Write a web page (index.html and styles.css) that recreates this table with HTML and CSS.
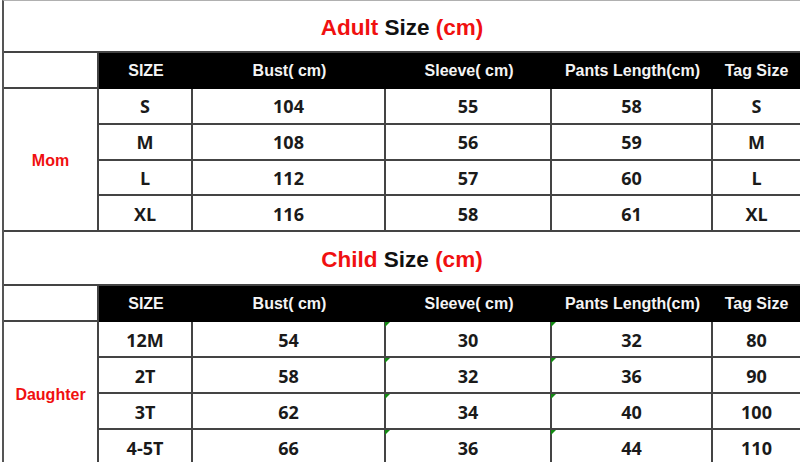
FILE: index.html
```html
<!DOCTYPE html>
<html>
<head>
<meta charset="utf-8">
<link rel="stylesheet" href="styles.css">
</head>
<body>
<div class="sheet">
  <section class="sec sec-adult">
    <div class="title"><p class="title-text"><span class="red">Adult</span> Size <span class="red">(cm)</span></p></div>
    <div class="cell blank"></div>
    <div class="cell head">SIZE</div>
    <div class="cell head">Bust( cm)</div>
    <div class="cell head">Sleeve( cm)</div>
    <div class="cell head">Pants Length(cm)</div>
    <div class="cell head last">Tag Size</div>
    <div class="cell label">Mom</div>
    <div class="cell">S</div><div class="cell">104</div><div class="cell">55</div><div class="cell">58</div><div class="cell last">S</div>
    <div class="cell">M</div><div class="cell">108</div><div class="cell">56</div><div class="cell">59</div><div class="cell last">M</div>
    <div class="cell">L</div><div class="cell">112</div><div class="cell">57</div><div class="cell">60</div><div class="cell last">L</div>
    <div class="cell">XL</div><div class="cell">116</div><div class="cell">58</div><div class="cell">61</div><div class="cell last">XL</div>
  </section>
  <section class="sec sec-child">
    <div class="title"><p class="title-text"><span class="red">Child</span> Size <span class="red">(cm)</span></p></div>
    <div class="cell blank"></div>
    <div class="cell head">SIZE</div>
    <div class="cell head">Bust( cm)</div>
    <div class="cell head">Sleeve( cm)</div>
    <div class="cell head">Pants Length(cm)</div>
    <div class="cell head last">Tag Size</div>
    <div class="cell label">Daughter</div>
    <div class="cell">12M</div><div class="cell">54</div><div class="cell flag">30</div><div class="cell flag">32</div><div class="cell last">80</div>
    <div class="cell">2T</div><div class="cell">58</div><div class="cell flag">32</div><div class="cell flag">36</div><div class="cell last">90</div>
    <div class="cell">3T</div><div class="cell">62</div><div class="cell flag">34</div><div class="cell flag">40</div><div class="cell last">100</div>
    <div class="cell">4-5T</div><div class="cell">66</div><div class="cell flag">36</div><div class="cell flag">44</div><div class="cell last">110</div>
  </section>
</div>
</body>
</html>
```

FILE: styles.css
```css
html, body {
  margin: 0;
  padding: 0;
  background: #fff;
  overflow: hidden;
}

.sheet {
  margin-left: 2px;
  width: 798px;
  border-left: 2px solid #555;
  border-top: 1px solid #b0b0b0;
  box-sizing: border-box;
}

.sec {
  display: grid;
  grid-template-columns: 95px 94px 193px 166px 161px 87px;
}

.sec-adult {
  grid-template-rows: 52px 36px repeat(4, 35.75px);
}

.sec-child {
  grid-template-rows: 54px 36px repeat(4, 36px);
}

.title {
  grid-column: 1 / -1;
  border-bottom: 2px solid #444;
  display: flex;
  align-items: center;
  justify-content: center;
  padding-top: 3px;
  box-sizing: border-box;
}

.title-text {
  margin: 0;
  font-family: "Liberation Sans", Arial, sans-serif;
  font-weight: 700;
  font-size: 22.5px;
  color: #111;
  white-space: pre;
}

.red {
  color: #f01010;
}

.cell {
  position: relative;
  box-sizing: border-box;
  border-right: 2px solid #444;
  border-bottom: 2px solid #444;
  display: flex;
  align-items: center;
  justify-content: center;
  font-family: "Open Sans", "Noto Sans", sans-serif;
  font-weight: 700;
  font-size: 18px;
  color: #1a1a1a;
  padding-top: 1px;
}

.cell.last {
  border-right: none;
}

.head {
  background: #000;
  color: #f4f4f4;
  border-right: none;
  border-bottom-color: #000;
  font-family: "Liberation Sans", Arial, sans-serif;
  font-size: 16px;
  padding-top: 2px;
}

.blank {
  background: #fff;
}

.label {
  grid-row: span 4;
  font-family: "Liberation Sans", Arial, sans-serif;
  font-size: 16px;
  color: #f01010;
  padding-top: 3px;
}

.flag::before {
  content: "";
  position: absolute;
  left: -1px;
  top: 0;
  width: 0;
  height: 0;
  border-top: 5px solid #138a13;
  border-right: 5px solid transparent;
}
```
